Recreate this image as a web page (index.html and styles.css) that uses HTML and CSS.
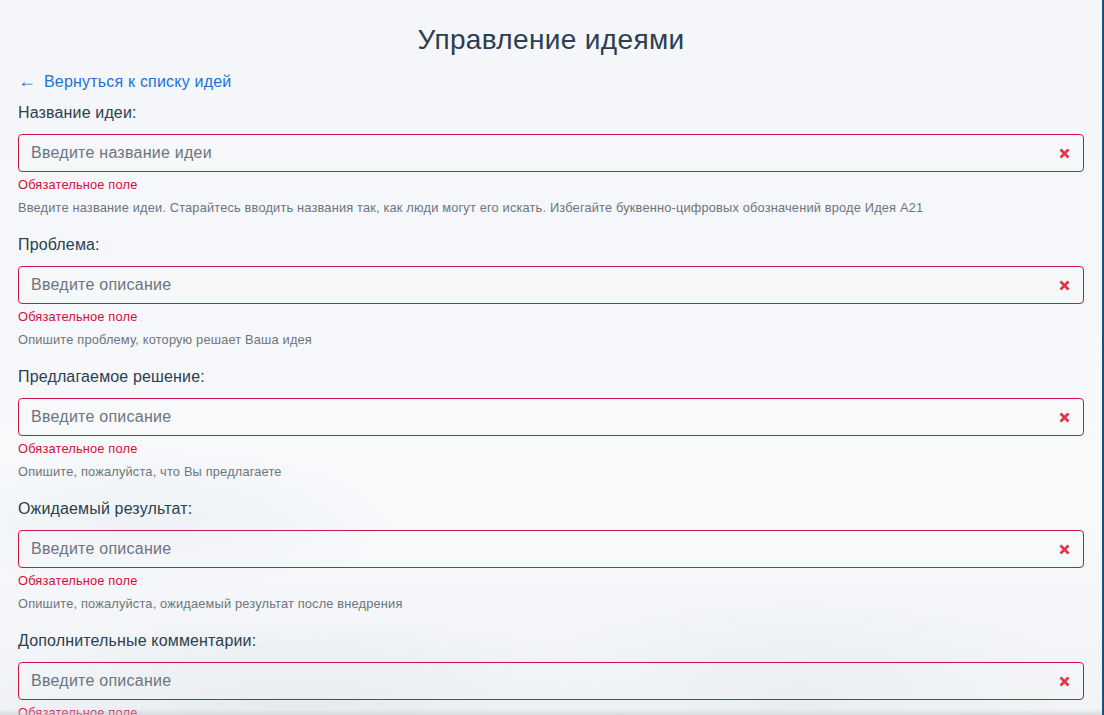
FILE: index.html
```html
<!DOCTYPE html>
<html lang="ru">
<head>
<meta charset="utf-8">
<title>Управление идеями</title>
<link rel="stylesheet" href="styles.css">
</head>
<body>
<div class="page">
  <h1 class="title">Управление идеями</h1>
  <a class="back" href="#"><span class="arrow">←</span>Вернуться к списку идей</a>

  <div class="field">
    <label class="label">Название идеи:</label>
    <div class="input">
      <span class="placeholder">Введите название идеи</span>
      <svg class="x" width="11" height="11" viewBox="0 0 11 11"><path d="M1.5 1.5L9.5 9.5M9.5 1.5L1.5 9.5" stroke="#dc3545" stroke-width="2.6" stroke-linecap="butt"/></svg>
    </div>
    <div class="error">Обязательное поле</div>
    <div class="help">Введите название идеи. Старайтесь вводить названия так, как люди могут его искать. Избегайте буквенно-цифровых обозначений вроде Идея А21</div>
  </div>

  <div class="field">
    <label class="label">Проблема:</label>
    <div class="input">
      <span class="placeholder">Введите описание</span>
      <svg class="x" width="11" height="11" viewBox="0 0 11 11"><path d="M1.5 1.5L9.5 9.5M9.5 1.5L1.5 9.5" stroke="#dc3545" stroke-width="2.6" stroke-linecap="butt"/></svg>
    </div>
    <div class="error">Обязательное поле</div>
    <div class="help">Опишите проблему, которую решает Ваша идея</div>
  </div>

  <div class="field">
    <label class="label">Предлагаемое решение:</label>
    <div class="input">
      <span class="placeholder">Введите описание</span>
      <svg class="x" width="11" height="11" viewBox="0 0 11 11"><path d="M1.5 1.5L9.5 9.5M9.5 1.5L1.5 9.5" stroke="#dc3545" stroke-width="2.6" stroke-linecap="butt"/></svg>
    </div>
    <div class="error">Обязательное поле</div>
    <div class="help">Опишите, пожалуйста, что Вы предлагаете</div>
  </div>

  <div class="field">
    <label class="label">Ожидаемый результат:</label>
    <div class="input">
      <span class="placeholder">Введите описание</span>
      <svg class="x" width="11" height="11" viewBox="0 0 11 11"><path d="M1.5 1.5L9.5 9.5M9.5 1.5L1.5 9.5" stroke="#dc3545" stroke-width="2.6" stroke-linecap="butt"/></svg>
    </div>
    <div class="error">Обязательное поле</div>
    <div class="help">Опишите, пожалуйста, ожидаемый результат после внедрения</div>
  </div>

  <div class="field">
    <label class="label">Дополнительные комментарии:</label>
    <div class="input">
      <span class="placeholder">Введите описание</span>
      <svg class="x" width="11" height="11" viewBox="0 0 11 11"><path d="M1.5 1.5L9.5 9.5M9.5 1.5L1.5 9.5" stroke="#dc3545" stroke-width="2.6" stroke-linecap="butt"/></svg>
    </div>
    <div class="error">Обязательное поле</div>
    <div class="help">Любые дополнительные комментарии</div>
  </div>
</div>
<div class="bottom-shade"></div>
</body>
</html>
```

FILE: styles.css
```css
html, body {
  margin: 0;
  padding: 0;
  height: 100%;
  overflow: hidden;
}

body {
  font-family: "Liberation Sans", Arial, Helvetica, sans-serif;
  color: #2c3e50;
  background:
    radial-gradient(ellipse 500px 120px at 300px 700px, rgba(225,230,236,0.7), rgba(225,230,236,0) 70%),
    radial-gradient(ellipse 400px 140px at 800px 690px, rgba(226,231,237,0.6), rgba(226,231,237,0) 70%),
    radial-gradient(ellipse 350px 100px at 150px 520px, rgba(232,236,241,0.6), rgba(232,236,241,0) 70%),
    linear-gradient(180deg, #f4f6fa 0%, #f5f7fa 40%, #f7f9fb 70%, #f1f3f6 100%);
  border-right: 2px solid #1d4f7c;
  box-sizing: border-box;
  position: relative;
}

.page {
  padding: 23px 18px 0 18px;
  display: flex;
  flex-direction: column;
}

.title {
  margin: 0;
  font-size: 28px;
  line-height: 34px;
  font-weight: 400;
  letter-spacing: 0.35px;
  text-align: center;
  color: #2c3e50;
}

.back {
  margin-top: 13px;
  font-size: 16px;
  line-height: 24px;
  letter-spacing: 0.2px;
  color: #1a73d9;
  text-decoration: none;
  align-self: flex-start;
}

.arrow {
  display: inline-block;
  width: 26px;
  font-size: 18px;
  line-height: 20px;
}

.field {
  display: flex;
  flex-direction: column;
  margin-top: 7px;
  margin-bottom: 9px;
}

.label {
  font-size: 16px;
  line-height: 24px;
  letter-spacing: 0.15px;
  color: #2c3e50;
  margin-bottom: 9px;
}

.input {
  height: 38px;
  box-sizing: border-box;
  border: 1px solid #c8183f;
  border-radius: 4px;
  display: flex;
  align-items: center;
  justify-content: space-between;
  padding: 0 13px 0 12px;
  background: rgba(255,255,255,0.15);
}

.placeholder {
  font-size: 16px;
  letter-spacing: 0.25px;
  color: #6c757d;
}

.x {
  display: block;
}

.error {
  margin-top: 4px;
  font-size: 12.8px;
  line-height: 18px;
  letter-spacing: 0.18px;
  color: #d0103a;
}

.help {
  margin-top: 5px;
  font-size: 12.8px;
  line-height: 18px;
  letter-spacing: 0.18px;
  color: #6c757d;
}

.bottom-shade {
  position: absolute;
  left: 0;
  right: 0;
  bottom: 0;
  height: 6px;
  background: linear-gradient(180deg, rgba(200,203,207,0) 0%, rgba(200,203,207,0.6) 100%);
}
```
